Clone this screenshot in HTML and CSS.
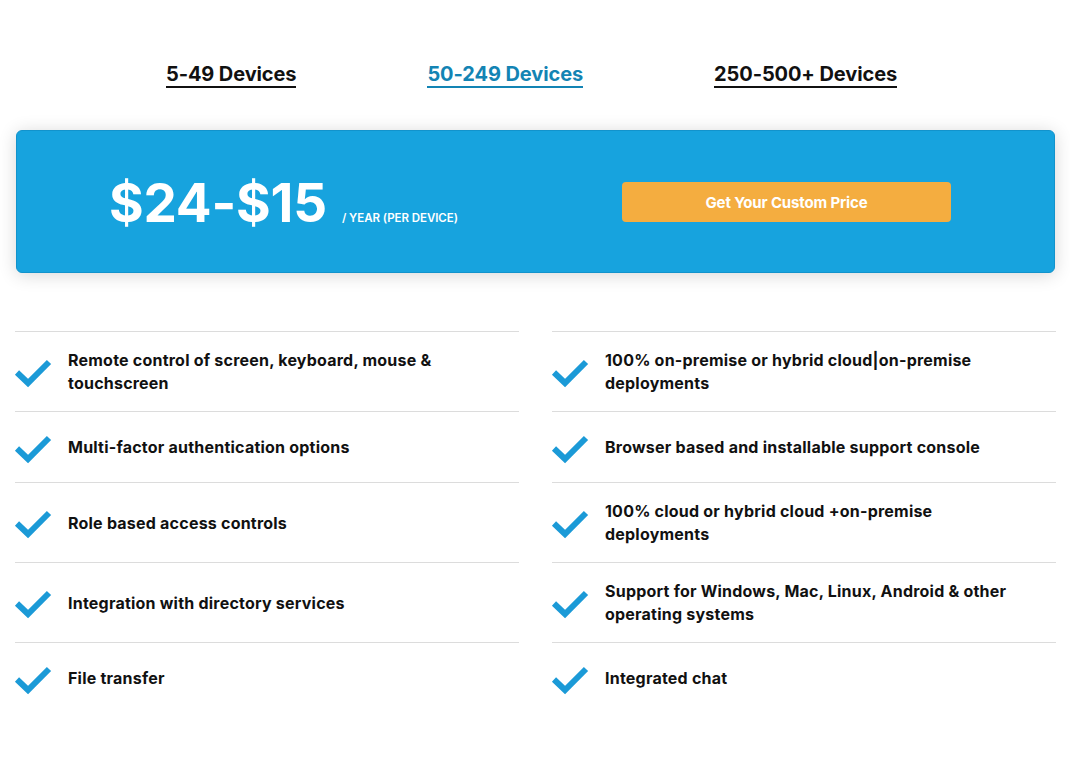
FILE: index.html
```html
<!DOCTYPE html>
<html lang="en">
<head>
<meta charset="utf-8">
<title>Pricing</title>
<link rel="stylesheet" href="styles.css">
</head>
<body>
<div class="page">
  <nav class="tabs">
    <a class="tab" href="#">5-49 Devices</a>
    <a class="tab active" href="#">50-249 Devices</a>
    <a class="tab" href="#">250-500+ Devices</a>
  </nav>

  <section class="banner">
    <div class="price">
      <span class="amount">$24-$15</span>
      <span class="unit">/ YEAR (PER DEVICE)</span>
    </div>
    <a class="cta" href="#">Get Your Custom Price</a>
  </section>

  <ul class="features">
    <li class="feature"><svg class="check" viewBox="0 0 38 30"><polyline points="3,14.5 14,25 35,4"/></svg><span>Remote control of screen, keyboard, mouse &amp; touchscreen</span></li>
    <li class="feature"><svg class="check" viewBox="0 0 38 30"><polyline points="3,14.5 14,25 35,4"/></svg><span>100% on-premise or hybrid cloud|on-premise deployments</span></li>
    <li class="feature"><svg class="check" viewBox="0 0 38 30"><polyline points="3,14.5 14,25 35,4"/></svg><span>Multi-factor authentication options</span></li>
    <li class="feature"><svg class="check" viewBox="0 0 38 30"><polyline points="3,14.5 14,25 35,4"/></svg><span>Browser based and installable support console</span></li>
    <li class="feature"><svg class="check" viewBox="0 0 38 30"><polyline points="3,14.5 14,25 35,4"/></svg><span>Role based access controls</span></li>
    <li class="feature"><svg class="check" viewBox="0 0 38 30"><polyline points="3,14.5 14,25 35,4"/></svg><span>100% cloud or hybrid cloud +on-premise deployments</span></li>
    <li class="feature"><svg class="check" viewBox="0 0 38 30"><polyline points="3,14.5 14,25 35,4"/></svg><span>Integration with directory services</span></li>
    <li class="feature"><svg class="check" viewBox="0 0 38 30"><polyline points="3,14.5 14,25 35,4"/></svg><span>Support for Windows, Mac, Linux, Android &amp; other operating systems</span></li>
    <li class="feature last"><svg class="check" viewBox="0 0 38 30"><polyline points="3,14.5 14,25 35,4"/></svg><span>File transfer</span></li>
    <li class="feature last"><svg class="check" viewBox="0 0 38 30"><polyline points="3,14.5 14,25 35,4"/></svg><span>Integrated chat</span></li>
  </ul>
</div>
</body>
</html>
```

FILE: styles.css
```css
* { box-sizing: border-box; }
html, body { margin: 0; padding: 0; background: #fff; }
body {
  font-family: Inter, "Liberation Sans", sans-serif;
  color: #111;
}
.page {
  width: 1041px;
  margin: 0 0 0 15px;
  padding-top: 61px;
}
.tabs {
  display: flex;
  justify-content: center;
  gap: 131px;
  padding-right: 8px;
  height: 69px;
}
.tab {
  font-size: 20px;
  font-weight: 700;
  color: #111;
  text-decoration: none;
  border-bottom: 2px solid #111;
  line-height: 26px;
  height: 27px;
  letter-spacing: -0.1px;
}
.tab.active {
  color: #1384b4;
  border-bottom-color: #1384b4;
}
.banner {
  margin: 0 1px;
  height: 143px;
  background: #17a3de;
  border: 1px solid #1293cc;
  border-radius: 6px;
  box-shadow: 0 2px 18px rgba(0,0,0,0.16);
  display: flex;
  align-items: center;
  padding: 0 103px 0 92px;
}
.price {
  display: flex;
  align-items: baseline;
  gap: 15px;
  margin-top: 2px;
}
.amount {
  font-size: 53px;
  font-weight: 700;
  color: #fff;
  letter-spacing: -0.2px;
}
.unit {
  font-size: 11.5px;
  font-weight: 600;
  color: #fff;
  letter-spacing: -0.05px;
}
.cta {
  margin-left: auto;
  width: 329px;
  height: 40px;
  background: #f4ad40;
  border-radius: 4px;
  color: #fff;
  font-size: 15px;
  font-weight: 700;
  text-decoration: none;
  display: flex;
  align-items: center;
  justify-content: center;
  letter-spacing: -0.15px;
  margin-top: 1px;
}
.features {
  list-style: none;
  margin: 58px 0 0;
  padding: 0;
  display: grid;
  grid-template-columns: 504px 504px;
  column-gap: 33px;
}
.feature {
  display: flex;
  align-items: center;
  min-height: 71px;
  border-top: 1px solid #dcdcdc;
  padding: 17px 0 16px;
  font-size: 16px;
  font-weight: 700;
  line-height: 23px;
  color: #111;
  letter-spacing: 0.22px;
}
.feature span { padding-right: 36px; }
.feature.last { border-bottom: none; }
.check {
  flex: none;
  width: 38px;
  height: 30px;
  margin-right: 16px;
  margin-left: -1px;
  margin-top: 2px;
}
.check polyline {
  fill: none;
  stroke: #1b9ad7;
  stroke-width: 6;
  stroke-linejoin: miter;
  stroke-linecap: butt;
}
```
